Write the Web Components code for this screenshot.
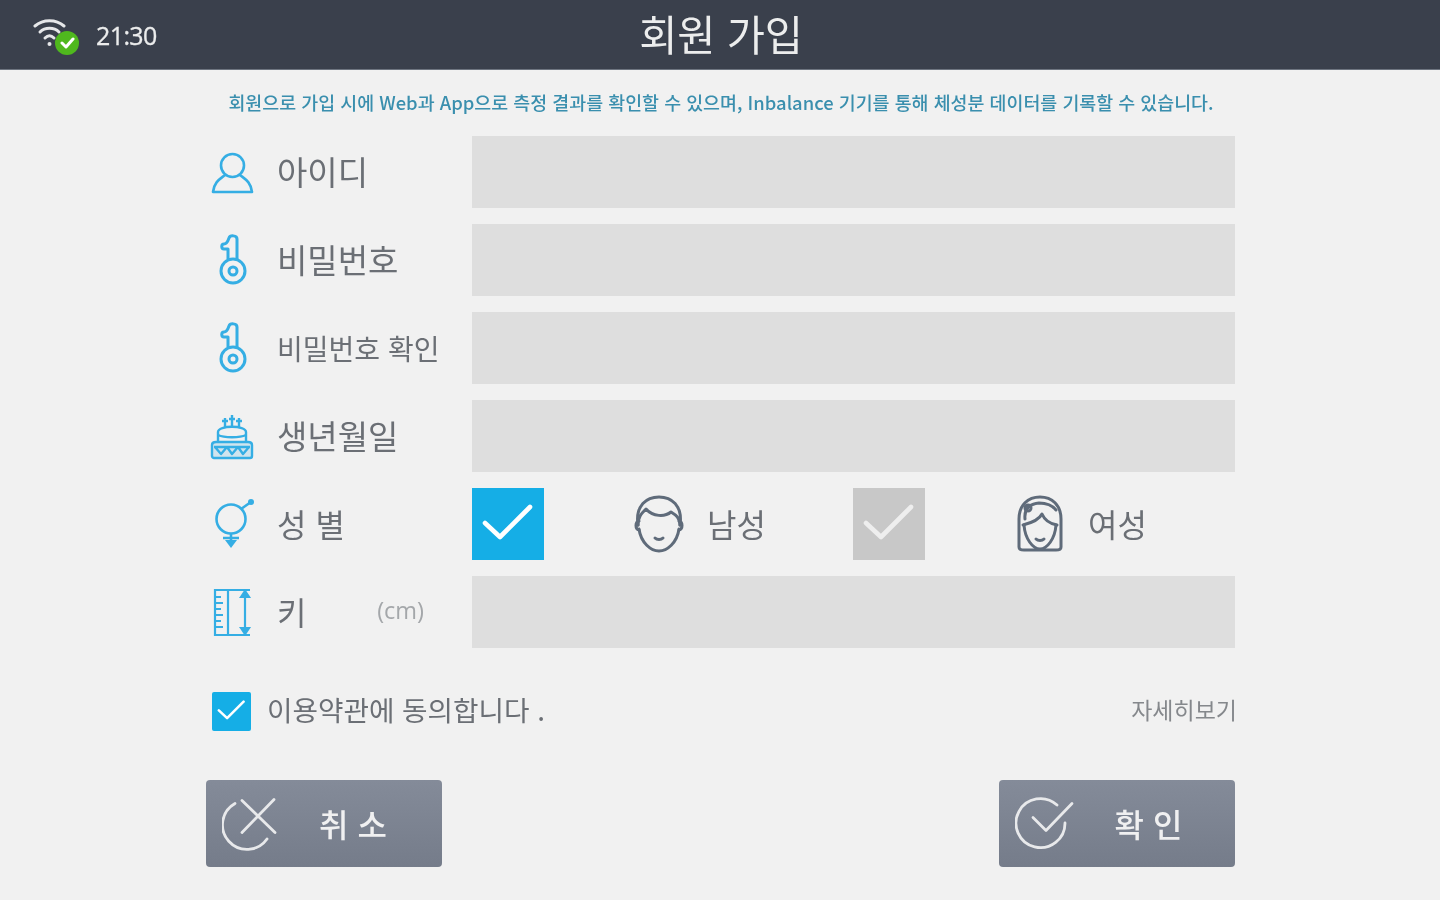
<!DOCTYPE html>
<html lang="ko">
<head>
<meta charset="utf-8">
<title>회원 가입</title>
<style>
	html, body {
		margin: 0;
		height: 100%;
		background: #f1f1f1;
		font-family: "Noto Sans CJK KR", "Noto Sans", sans-serif;
	}
</style>
</head>
<body>
<signup-screen></signup-screen>

<script>
const KR_FONT = `"Noto Sans CJK KR", "Noto Sans", sans-serif`;
const BLUE = "#35aee4";
const FACE = "#5f6b7a";

// Icons are keyed by name, every one is stroked on its own viewBox.
const ICONS = {
	user: `<svg width="44" height="44" viewBox="0 0 44 44" fill="none" stroke="${BLUE}" stroke-width="2.6" stroke-linejoin="round">
		<circle cx="22.500" cy="15.500" r="11.500"/>
		<path d="M15 25 C10 29 4 32 3 42 H42 C41 32 35 29 30 25"/>
	</svg>`,
	key: `<svg width="44" height="52" viewBox="0 0 44 52" fill="none" stroke="${BLUE}" stroke-width="3" stroke-linejoin="round">
		<path d="M18 25 V15 H14 C11 15 11 10 14 10 C16 10 18 7 19 4 C20 1 27 1 27 5 V25"/>
		<circle cx="23" cy="37" r="12"/>
		<circle cx="23" cy="37" r="4"/>
	</svg>`,
	cake: `<svg width="44" height="48" viewBox="0 0 44 48" fill="none" stroke="${BLUE}" stroke-width="2.4" stroke-linejoin="round">
		<path d="M15 6 V15 M22 3 V15 M29 6 V15 M12 9 H18 M19 7 H25 M26 9 H32"/>
		<path d="M8 30 V20 C8 13 36 13 36 20 V30"/>
		<path d="M8 23 C14 26 30 26 36 23"/>
		<path d="M2 33 C2 31 4 30 6 30 H38 C40 30 42 31 42 33 V44 C42 45 41 46 40 46 H4 C3 46 2 45 2 44 Z" fill="${BLUE}" fill-opacity=".18"/>
		<path d="M4 35 H40 M5 35 L11 42 L17 35 L22 42 L28 35 L33 42 L39 35"/>
	</svg>`,
	gender: `<svg width="44" height="52" viewBox="0 0 44 52" fill="none" stroke="${BLUE}" stroke-width="2.6">
		<circle cx="21" cy="21" r="14.500"/>
		<path d="M31 11 L41 4"/>
		<path d="M21 36 V47 M13 40 H29"/>
		<circle cx="41" cy="4" r="3" fill="${BLUE}" stroke="none"/>
		<path d="M15 42 H27 L21 50 Z" fill="${BLUE}" stroke="none"/>
	</svg>`,
	ruler: `<svg width="44" height="50" viewBox="0 0 44 50" fill="none" stroke="${BLUE}" stroke-width="2.2">
		<path d="M5 3 H18 V48 H5 Z"/>
		<path d="M18 3 H40 M18 48 H40"/>
		<path d="M5 10 H11 M5 16 H13 M5 22 H11 M5 28 H13 M5 34 H11 M5 40 H13"/>
		<path d="M35 6 V45"/>
		<path d="M31 10 L35 4 L39 10 Z M31 41 L35 47 L39 41 Z" fill="${BLUE}"/>
	</svg>`,
	male: `<svg width="52" height="58" viewBox="0 0 52 58" fill="none" stroke="${FACE}" stroke-width="3" stroke-linecap="round" stroke-linejoin="round">
		<path d="M5 30 C2 10 14 2 26 2 C38 2 50 10 47 30"/>
		<path d="M5 30 C5 22 8 19 13 14 C20 22 32 22 38 17 C43 20 47 23 47 30"/>
		<path d="M6 26 C2 27 2 34 6 35 M46 26 C50 27 50 34 46 35"/>
		<path d="M6 34 C8 48 18 56 26 56 C34 56 44 48 46 34"/>
		<path d="M22 43 C24 45 28 45 30 43"/>
	</svg>`,
	female: `<svg width="50" height="58" viewBox="0 0 50 58" fill="none" stroke="${FACE}" stroke-width="3" stroke-linecap="round" stroke-linejoin="round">
		<path d="M4 52 V24 C4 10 13 2 25 2 C37 2 46 10 46 24 V52 C46 54 44 55 41 55 H9 C6 55 4 54 4 52 Z"/>
		<path d="M10 24 C9 14 14 9 24 8 C31 8 37 10 41 15"/>
		<path d="M8 30 C16 28 24 25 27 19 C30 26 36 29 42 30"/>
		<path d="M9 30 C10 44 18 54 25 54 C32 54 40 44 41 30"/>
		<circle cx="13" cy="13" r="3"/>
		<path d="M21 44 C23 46 27 46 29 44"/>
	</svg>`,
	check: `<svg width="52" height="40" viewBox="0 0 52 40" fill="none" stroke="currentColor" stroke-width="4.6" stroke-linecap="round" stroke-linejoin="round">
		<path d="M3 19 L18 33 L48 3"/>
	</svg>`,
	cancel: `<svg width="56" height="56" viewBox="0 0 56 56" fill="none" stroke="#e8e9eb" stroke-width="2.8" stroke-linecap="round">
		<path d="M13 7.500 A24.500 24.500 0 1 0 45 43"/>
		<path d="M20 4.500 L53 36.500 M52 3.500 L20 36.500"/>
	</svg>`,
	confirm: `<svg width="60" height="56" viewBox="0 0 60 56" fill="none" stroke="#e8e9eb" stroke-width="2.8" stroke-linecap="round" stroke-linejoin="round">
		<path d="M42 9 A24.500 24.500 0 1 0 50 27"/>
		<path d="M18 21.500 L31 34.500 L57 7.500"/>
	</svg>`,
	wifi: `<svg width="36" height="34" viewBox="0 0 36 34" fill="none" stroke="#e6e7e9" stroke-width="3" stroke-linecap="round">
		<path d="M2 10 C10 3 23 3 31 10"/>
		<path d="M7 16 C12 11 21 11 26 16"/>
		<path d="M12 22 C15 19 18 19 21 22"/>
		<circle cx="16.500" cy="28" r="2" fill="#e6e7e9" stroke="none"/>
	</svg>`,
};

class StatusHeader extends HTMLElement {
	constructor() {
		super();
		this.attachShadow({ mode: "open" });
		this.shadowRoot.innerHTML = `
		<style>
			:host {
				display: grid;
				grid-template-columns: 1fr auto 1fr;
				align-items: center;
				height: 70px;
				background: #3a404c;
				box-shadow: inset 0 -1px 0 #6e7580;
				color: #eceded;
			}
			.status {
				display: flex;
				align-items: center;
				gap: 18px;
				padding-left: 33px;
			}
			.wifi {
				position: relative;
				display: flex;
				width: 45px;
				height: 38px;
			}
			.badge {
				position: absolute;
				right: -1px;
				bottom: -1px;
				display: flex;
				width: 24px;
				height: 24px;
				align-items: center;
				justify-content: center;
				border-radius: 50%;
				background: #4fb81e;
			}
			.time {
				font: 400 25px/1 "Open Sans", sans-serif;
				letter-spacing: -.6px;
				-webkit-text-stroke: .3px currentColor;
			}
			h1 {
				margin: 0 0 3px 2px;
				font: 400 41.500px/67px ${KR_FONT};
				letter-spacing: -.2px;
			}
		</style>
		<div class="status">
			<span class="wifi">
				${ICONS.wifi}
				<span class="badge">
					<svg width="15" height="12" viewBox="0 0 15 12" fill="none" stroke="#fff" stroke-width="3" stroke-linecap="round" stroke-linejoin="round"><path d="M2 6 L6 10 L13 2"/></svg>
				</span>
			</span>
			<span class="time">21:30</span>
		</div>
		<h1><slot></slot></h1>`;
	}
}

class FormRow extends HTMLElement {
	constructor() {
		super();
		this.attachShadow({ mode: "open" });
	}

	connectedCallback() {
		const icon = this.getAttribute("icon");
		const size = this.getAttribute("size") || "32";
		const unit = this.getAttribute("unit");
		this.shadowRoot.innerHTML = `
		<style>
			:host {
				display: grid;
				grid-template-columns: 266px 1fr;
				height: 72px;
			}
			.label {
				display: flex;
				align-items: center;
				color: #6b6f75;
				font: 400 ${size}px/1 ${KR_FONT};
				padding-left: 4px;
			}
			.icon {
				display: flex;
				flex: none;
				justify-content: center;
				width: 44px;
				margin-right: 23px;
			}
			::slotted([slot="label"]) {
				margin-bottom: var(--label-lift, 2px);
			}
			.unit {
				margin-left: auto;
				margin-right: 48px;
				margin-bottom: 3px;
				font: 400 23.500px/1 "Open Sans", sans-serif;
				color: #a4a7aa;
			}
			.field {
				background: #dedede;
			}
		</style>
		<div class="label">
			<span class="icon">${ICONS[icon]}</span>
			<slot name="label"></slot>
			${unit ? `<span class="unit">${unit}</span>` : ""}
		</div>
		<slot name="field"><div class="field"></div></slot>`;
	}
}

class GenderOption extends HTMLElement {
	constructor() {
		super();
		this.attachShadow({ mode: "open" });
	}

	connectedCallback() {
		const on = this.hasAttribute("checked");
		this.shadowRoot.innerHTML = `
		<style>
			:host {
				display: flex;
				align-items: center;
			}
			.box {
				display: flex;
				width: 72px;
				height: 72px;
				align-items: center;
				justify-content: center;
				background: ${on ? "#15aee6" : "#c8c8c8"};
				color: ${on ? "#fff" : "#eeeeee"};
			}
			.face {
				display: flex;
				width: 52px;
				margin-left: 89px;
				justify-content: center;
			}
			.text {
				margin: 0 0 3px 22px;
				color: #6b6f75;
				font: 400 32px/1 ${KR_FONT};
			}
		</style>
		<div class="box">${ICONS.check}</div>
		<div class="face">${ICONS[this.getAttribute("face")]}</div>
		<div class="text"><slot></slot></div>`;
	}
}

class TermsRow extends HTMLElement {
	constructor() {
		super();
		this.attachShadow({ mode: "open" });
		this.shadowRoot.innerHTML = `
		<style>
			:host {
				display: flex;
				align-items: center;
				height: 40px;
				padding-left: 6px;
				color: #6b6f75;
			}
			.box {
				display: flex;
				width: 39px;
				height: 39px;
				margin-right: 16px;
				align-items: center;
				justify-content: center;
				border-radius: 2px;
				background: #15aee6;
				color: #fff;
			}
			.box svg {
				width: 29px;
				height: 22px;
			}
			.text {
				margin-bottom: 3px;
				font: 400 27.700px/1 ${KR_FONT};
			}
			.more {
				margin: 0 -2px 3px auto;
				font: 400 23px/1 ${KR_FONT};
				color: #85888c;
			}
		</style>
		<div class="box">${ICONS.check}</div>
		<div class="text"><slot></slot></div>
		<div class="more"><slot name="more"></slot></div>`;
	}
}

class ActionButton extends HTMLElement {
	constructor() {
		super();
		this.attachShadow({ mode: "open" });
	}

	connectedCallback() {
		this.shadowRoot.innerHTML = `
		<style>
			:host {
				display: flex;
				align-items: center;
				width: 236px;
				height: 87px;
				box-sizing: border-box;
				padding-left: 16px;
				border-radius: 4px;
				background: linear-gradient(#848b99, #757c8a);
				color: #f0f0f1;
				font: 500 32px/1 ${KR_FONT};
			}
			.icon {
				display: flex;
				width: 60px;
				flex: none;
			}
			.text {
				flex: 1;
				padding: 0 var(--text-inset, 18px) 2px 0;
				text-align: center;
				white-space: pre;
			}
		</style>
		<span class="icon">${ICONS[this.getAttribute("icon")]}</span>
		<span class="text"><slot></slot></span>`;
	}
}

class SignupScreen extends HTMLElement {
	constructor() {
		super();
		this.attachShadow({ mode: "open" });
		this.shadowRoot.innerHTML = `
		<style>
			:host {
				display: block;
				height: 900px;
				overflow: hidden;
				filter: blur(.75px);
			}
			.notice {
				margin: 0;
				height: 66px;
				box-sizing: border-box;
				padding: 20px 0 0 2px;
				color: #3a8fae;
				font: 500 18.400px/24px ${KR_FONT};
				text-align: center;
			}
			form {
				display: flex;
				flex-direction: column;
				width: 1029px;
				margin-left: 206px;
			}
			.rows {
				display: flex;
				flex-direction: column;
				gap: 16px;
			}
			.genders {
				display: grid;
				grid-template-columns: 381px 1fr;
				align-items: center;
			}
			terms-row {
				margin-top: 43px;
			}
			.actions {
				display: flex;
				justify-content: space-between;
				margin-top: 49px;
			}
		</style>
		<status-header>회원 가입</status-header>
		<p class="notice">회원으로 가입 시에 Web과 App으로 측정 결과를 확인할 수 있으며, Inbalance 기기를 통해 체성분 데이터를 기록할 수 있습니다.</p>
		<form>
			<div class="rows">
				<form-row icon="user" size="33"><span slot="label">아이디</span></form-row>
				<form-row icon="key" size="33"><span slot="label">비밀번호</span></form-row>
				<form-row icon="key" size="28" style="--label-lift: 0px"><span slot="label">비밀번호 확인</span></form-row>
				<form-row icon="cake" size="33"><span slot="label">생년월일</span></form-row>
				<form-row icon="gender" size="32" style="--label-lift: 3px">
					<span slot="label">성 별</span>
					<div slot="field" class="genders">
						<gender-option face="male" checked>남성</gender-option>
						<gender-option face="female">여성</gender-option>
					</div>
				</form-row>
				<form-row icon="ruler" size="32" unit="(cm)" style="--label-lift: 3px"><span slot="label">키</span></form-row>
			</div>
			<terms-row>이용약관에 동의합니다 .<span slot="more">자세히보기</span></terms-row>
			<div class="actions">
				<action-button icon="cancel">취 소</action-button>
				<action-button icon="confirm" style="--text-inset: 13px">확 인</action-button>
			</div>
		</form>`;
	}
}

customElements.define("status-header", StatusHeader);
customElements.define("form-row", FormRow);
customElements.define("gender-option", GenderOption);
customElements.define("terms-row", TermsRow);
customElements.define("action-button", ActionButton);
customElements.define("signup-screen", SignupScreen);
</script>
</body>
</html>
